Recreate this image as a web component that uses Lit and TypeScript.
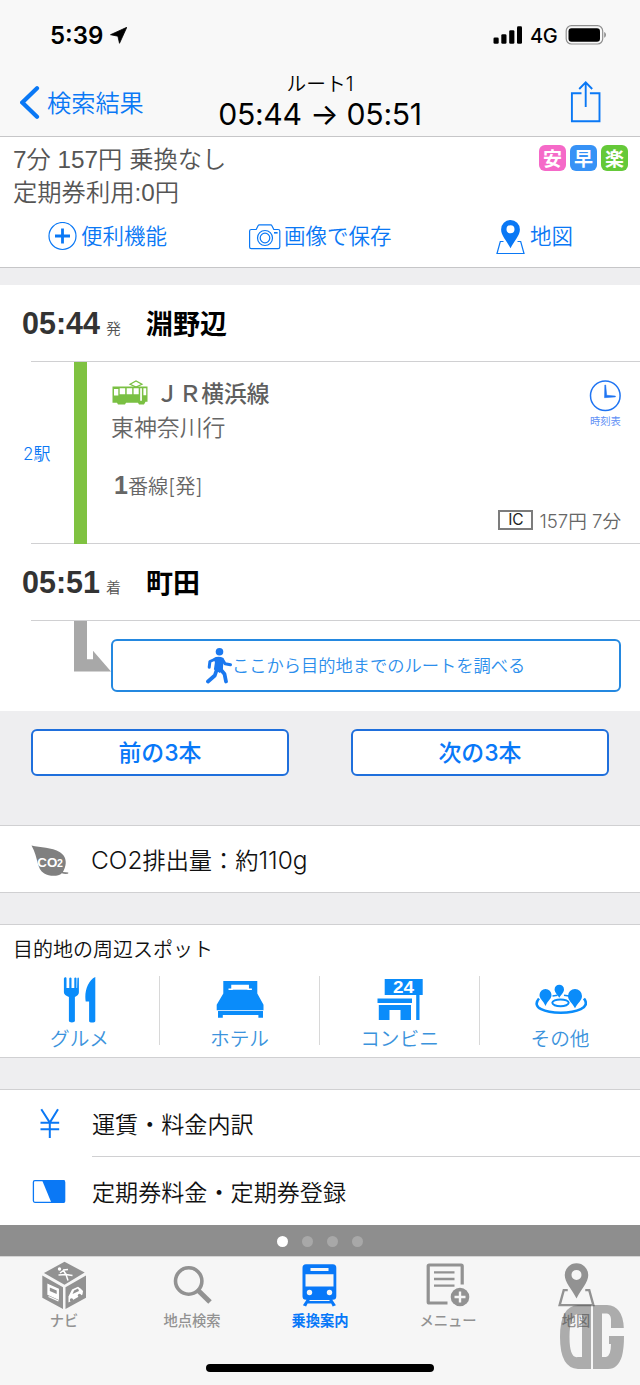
import { LitElement, html, css, svg } from "lit";
import { customElement, property } from "lit/decorators.js";

const icon = (box: string, w: number, h: number, body: unknown) =>
  html`<svg viewBox=${box} width=${w} height=${h} fill="currentColor">${body}</svg>`;

const pin = (sw: number) => svg`
  <path d="M510.500 220a9.400 9.400 0 0 0-9.400 9.400c0 6.100 5.500 11 9.400 18.800 3.900-7.800 9.400-12.700 9.400-18.800a9.400 9.400 0 0 0-9.400-9.400zm0 5.300a4 4 0 1 1 0 8 4 4 0 0 1 0-8z" fill-rule="evenodd"/>
  <path d="M503.500 241.500h-3.200l-3.300 12h27l-3.300-12h-3.200" fill="none" stroke="currentColor" stroke-width=${sw}/>`;

const icons = {
  location: icon("110 27 17 17", 17, 17, svg`<path d="M126.800 27.300 110.500 34.700 117.900 36.200 119.500 43.300z" stroke="currentColor" stroke-width=".8" stroke-linejoin="round"/>`),
  signal: icon("493 26 30 18", 30, 18, svg`<rect x="493.500" y="37.500" width="5.200" height="6.300" rx="1.300"/><rect x="501.300" y="34.300" width="5.200" height="9.500" rx="1.300"/><rect x="509.200" y="30.300" width="5.200" height="13.500" rx="1.300"/><rect x="517" y="26.200" width="5" height="17.600" rx="1.300"/>`),
  battery: icon("565 25 42 20", 42, 20, svg`<rect x="566.200" y="25.700" width="36.500" height="18.300" rx="5.200" fill="#f8f8f8" stroke="#8f8f8f" stroke-width="1.200"/><rect x="568.500" y="28.300" width="31.500" height="13.400" rx="3"/><path d="M604.200 32c2.400 1 2.400 4.700 0 5.800z" fill="#8f8f8f"/>`),
  back: icon("20 86 20 33", 20, 33, svg`<path d="M37 88.300 22.300 102.500 37 116.700" fill="none" stroke="currentColor" stroke-width="4.200" stroke-linecap="round"/>`),
  share: icon("570 80 32 43", 32, 43, svg`<path d="M581.500 93.300h-9.600v28h27.600v-28h-9.600M585.700 107V82.500M579.200 89l6.500-6.700 6.500 6.700" fill="none" stroke="currentColor" stroke-width="1.900"/>`),
  plus: icon("48 222 29 29", 29, 29, svg`<circle cx="62.500" cy="236" r="13.500" fill="none" stroke="currentColor" stroke-width="1.200"/><path d="M55 236h15M62.500 228.500v15" stroke="currentColor" stroke-width="2.800"/>`),
  camera: icon("249 223 32 26", 32, 26, svg`<g fill="none" stroke="currentColor" stroke-width="1.200"><path d="M251.300 228.500h4.900l2-4c.3-.5.600-.7 1.200-.700h11.200c.6 0 1 .2 1.200.7l2 4h4.300c1 0 1.700.7 1.700 1.600v15.900c0 1-.7 1.600-1.700 1.600h-26.800c-1 0-1.700-.7-1.700-1.600v-15.900c0-.9.700-1.600 1.700-1.600z"/><circle cx="265" cy="237" r="7.500"/><circle cx="265" cy="237" r="4.800"/></g><rect x="274" y="231" width="3.600" height="1.600"/>`),
  map: icon("496 219 29 36", 29, 36, pin(1.2)),
  mapTab: icon("496 219 29 36", 37, 45, pin(1.9)),
  tram: icon("112 380 36 25", 36, 25, svg`<path d="M112.500 386.500h35v15.300h-2l-1.500 2.600h-5l-1-1.600h-12l-1 1.600h-7l-1-1.600h-4.500z"/><path d="M130 384.200 136 381 142 384.200 136 387z" fill="none" stroke="currentColor" stroke-width="1.200"/><path d="M114 389h4.300v6.500h-4.300zM119.700 388.300h5.500v6h-5.500zM126.700 388.300h5.500v6h-5.500zM133.600 388.300h5.100v6h-5.100zM140.200 388.300h1.700v12.500h-1.700zM143.400 388.300h2.800v7h-2.800z" fill="#fff"/>`),
  clock: icon("589 380 32 32", 32, 32, svg`<circle cx="605.300" cy="395.800" r="14.800" fill="none" stroke="currentColor" stroke-width="1.500"/><path d="M604.800 385h.9l1 10.300 8.700.7v.9l-10.900.8z" stroke="currentColor" stroke-width=".5"/>`),
  turn: icon("74 621 37 51", 37, 51, svg`<path d="M74 621h13v38.300h6v-8.600L111 671.500H74z"/>`),
  walk: icon("205 647 28 37", 28, 37, svg`<circle cx="219.500" cy="651.700" r="3.800"/><g fill="none" stroke="currentColor" stroke-linecap="round" stroke-linejoin="round"><path d="M215.500 659 209.900 661.500 209.200 667.300M222.500 659.500 225 663.700 230.500 664.800" stroke-width="3"/><path d="M217 669 214.800 675.500 208 681.500M219.800 668.500 224.500 674 226 681.500" stroke-width="3.800"/></g><path d="M213.500 658.200q4.500-2.500 10-.3l-.6 12-3 3-6-3.500 1-7z"/>`),
  leaf: icon("31 845 38 32", 38, 32, svg`<path d="M31.500 845.500c9 2.500 20 1.500 28.500 6.800 5.500 3.500 7 9.500 4.800 15.500-.7 2-1.200 3-1.900 4.200l5.400.6-.2 1.200c-2.500.3-4.500.1-6.300-.6-3.500 3.600-12.500 3.300-17.500.3-8-5-5.500-14.500-12.800-28z"/><text class="co" x="37.300" y="867.200" font-size="13.500" textLength="20" lengthAdjust="spacingAndGlyphs" fill="#fff">CO</text><text class="co" x="57" y="867.200" font-size="10.500" fill="#fff">2</text>`),
  food: icon("62 976 36 47", 36, 47, svg`<path d="M64.600 977.500c.9-.4 1.800 0 1.900.8V988h2.800v-9.700c.2-1.200 2-1.200 2.200 0V988h2.800v-9.700c.2-1.200 2-1.200 2.200 0V988h.6l.3-9.700c.2-1 1.400-1 1.500.2v13.800c0 2.300-1.500 3.700-4 4.600v24.200c0 1.800-6 1.800-6 0v-24.200c-3-.9-5-2.300-5-4.600v-13.800zM95.300 978v43c0 2-6.200 2-6.200.2v-19.700h-3.400c-1.600-9.500 2-21 9.600-24.500z"/>`),
  bed: icon("216 980 48 39", 48, 39, svg`<path d="M223.300 981h34v12.500l6.200 11.200v5.500h-46.800v-5.500l6.600-11.200z"/><path d="M218 1011h45v6.800h-4.600V1015h-35.600v2.800H218z"/><path d="M228.500 989.200h3.500v-3.700h16.200v3.700h3.700" fill="none" stroke="#fff" stroke-width="1.500"/><path d="M232 986h16v3.700h-16z" fill="#fff"/>`),
  store: icon("377 978 46 43", 46, 43, svg`<path d="M384.700 979h38v16h-3.200v25h-3.300v-25h-31.500zM377.500 998.500H412v4.500h-34.500zM378.800 1005H411v15h-10.500v-10h-11v10h-10.700z"/><text class="sign" x="393" y="993" font-size="16.800" textLength="21" lengthAdjust="spacingAndGlyphs" fill="#fff">24</text>`),
  spots: icon("533 984 53 31", 53, 31, svg`<g fill="none" stroke="currentColor"><path d="M538 998.500c-16.500 19 59.500 19 45 0" stroke-width="2.600"/><ellipse cx="559.500" cy="1002.800" rx="8.200" ry="3.400" stroke-width="2"/><path d="M551.500 996l5-.8M563 995.200l5 .8" stroke-width="1.600"/></g><path d="M544.500 989a6 6 0 0 0-6 6c0 4 3.500 5 6 11 2.500-6 6-7 6-11a6 6 0 0 0-6-6zM558.300 984.700a4.700 4.700 0 0 0-4.700 4.700c0 3 2.700 4.700 4.700 8.300 2-3.600 4.700-5.300 4.700-8.300a4.700 4.700 0 0 0-4.700-4.700zM574 989a7 7 0 0 0-7 7c0 4.500 4 6.500 7 12.200 3-5.700 7-7.700 7-12.200a7 7 0 0 0-7-7z"/>`),
  yen: icon("39 1108 21 31", 21, 31, svg`<path d="M41.300 1109.200 49.800 1122.500 58 1109.200M49.800 1122v16M40.500 1122.700h18.700M40.500 1129.300h18.700" fill="none" stroke="currentColor" stroke-width="2"/>`),
  pass: icon("32 1179 34 25" , 34, 25, svg`<rect x="33.400" y="1180.700" width="31.100" height="21.600" rx="1.500" fill="#fff" stroke="currentColor" stroke-width="1.300"/><path d="M42 1180h21.500q1.700 0 1.700 1.700v19.600q0 1.700-1.700 1.700H51.500z"/>`),
  navi: icon("42 1261 45 49", 45, 49, svg`<path d="M64.500 1261.800 84.700 1272.500 64.500 1284.700 44 1273zM42.300 1275.500 63 1287.200V1309L42.300 1297.700zM86 1275.500 65.500 1287.200V1309L86 1297.700z"/><circle cx="59.500" cy="1269" r="1.700" fill="#fff"/><path d="M60 1273 63.500 1270.500 66 1274.500 72.500 1275.500M58.500 1275 66 1274.500 68 1280.500M63 1270l5-.5" fill="none" stroke="#fff" stroke-width="1.500"/><path d="M48 1284.500 58.300 1289.200V1299L48 1294.300zM48.500 1296.500 58.500 1301" fill="#fff" stroke="#fff" stroke-width="1.300"/><path d="M49.800 1287.500 56.700 1290.500V1294L49.800 1291z"/><path d="M68.500 1296.500 72 1289.500 78 1286.700 80.800 1288.800 83 1291 82.500 1294.500 68.500 1302.500z" fill="#fff"/><circle cx="71.500" cy="1300" r="1.700"/><circle cx="79.500" cy="1295.500" r="1.700"/><path d="M72.500 1294 74 1290.500 78 1288.500 79 1291z"/>`),
  search: icon("174 1265 39 39", 39, 39, svg`<circle cx="189.700" cy="1281" r="13.200" fill="none" stroke="currentColor" stroke-width="3.600"/><path d="M199.500 1290.700 211 1302" stroke="currentColor" stroke-width="5"/>`),
  train: icon("302 1263 36 44", 36, 44, svg`<path d="M306 1264.300h26.800q3.500 0 3.500 3.500v28.500q0 3.500-3.500 3.500h-.5l3.600 5.500-3.200 1.200-1.500-3h-23.600l-1.500 3-3.200-1.200 3.600-5.500h-.5q-3.500 0-3.500-3.500v-28.500q0-3.500 3.500-3.500z"/><path d="M310.500 1268h18v3h-18zM305.500 1274.300h28V1286.500h-28z" fill="#f6f6f6"/><circle cx="309.500" cy="1292.500" r="2.700" fill="#f6f6f6"/><circle cx="329.500" cy="1292.500" r="2.700" fill="#f6f6f6"/><path d="M309.500 1300.500h20" stroke="#f6f6f6" stroke-width="1"/>`),
  menu: icon("427 1263 45 45", 45, 45, svg`<path d="M448.500 1304h-18.300q-1 0-1-1v-36q0-1 1-1h32q1 0 1 1v18.500" fill="none" stroke="currentColor" stroke-width="3.200"/><path d="M435 1273.300h20.500M435 1280h20.500M435 1286.700h20.500" stroke="currentColor" stroke-width="2.300"/><circle cx="461" cy="1298" r="9.300"/><path d="M461 1292.500v11M455.500 1298h11" stroke="#f6f6f6" stroke-width="2.400"/>`),
  emblem: icon("560 1305 64 64", 64, 64, svg`<path d="M591 1305v64h-13q-18-1-18-32t18-32zM582 1314h-4q-8.500 1-8.500 23t8.500 20h4z" fill-rule="evenodd"/><path d="M593 1305h14q16 1 16.800 23h-12.800v-9q-.5-5-4-5.500H602V1357h4q5-1 5-13h-2v-8h15q0 12-2 20-4 13-14 13H593z"/>`),
};

@customElement("rank-badge")
class RankBadge extends LitElement {
  @property() kind = "";
  static styles = css`
    :host { display: block; }
    .badge { width: 27px; height: 26px; border-radius: 6px; color: #fff; text-align: center; font: 700 19px/25px "Noto Sans CJK JP", sans-serif; }
    .cheap { background: #f569c8; }
    .fast { background: #3792f6; }
    .easy { background: #65c939; }
  `;
  render() {
    return html`<div class="badge ${this.kind}"><slot></slot></div>`;
  }
}

@customElement("app-root")
class AppRoot extends LitElement {
  static styles = css`
    :host { display: block; width: 640px; height: 1385px; overflow: hidden; background: #eeeef0; color: #111; position: relative;
      font-family: Inter, "Noto Sans CJK JP", sans-serif; --blue: #0a78f5; --line: #d0d0d2; }
    * { box-sizing: border-box; }
    svg { display: block; flex: none; }
    .row { display: flex; white-space: nowrap; }
    .header { height: 137px; background: #f8f8f8; border-bottom: 1px solid #c6c6c8; }
    .status { height: 68px; padding: 25px 33px 0 50px; color: #000; }
    .time { font-size: 24px; line-height: 21px; font-weight: 600; width: 60px; }
    .status .loc { padding-top: 2px; flex: 1; }
    .status .bars { padding-top: 1px; width: 37px; }
    .net { font-size: 20px; line-height: 22px; font-weight: 500; width: 35px; letter-spacing: -.4px; }
    .nav { display: grid; grid-template-columns: 200px 240px 200px; height: 68px; }
    .back { padding: 18px 0 0 20px; color: var(--blue); gap: 7px; font-size: 24.200px; line-height: 35px; font-weight: 350; }
    .title { text-align: center; color: #000; }
    .title small { display: block; font-size: 19.700px; line-height: 26px; height: 27px; padding-top: 3px; font-weight: 350; }
    .title b { display: block; font-weight: 400; font-size: 30.200px; line-height: 38px; letter-spacing: -.3px; white-space: nowrap; }
    .share { color: var(--blue); padding: 12px 0 0 130px; }
    .summary { height: 131px; background: #fff; border-bottom: 1px solid #c6c6c8; padding-top: 6px; }
    .facts { height: 67px; padding: 0 12px 0 13px; justify-content: space-between; color: #555; font: 350 24.300px/33px "Liberation Sans", "Noto Sans CJK JP", sans-serif; }
    .badges { display: flex; gap: 4px; padding-top: 2px; }
    .tools { color: var(--blue); font-size: 21.500px; line-height: 38px; font-weight: 350; }
    .tools .row { align-items: center; height: 52px; }
    .tools svg { margin-top: 1px; }
    .t1 { padding-left: 48px; gap: 4px; width: 249px; }
    .t2 { gap: 3px; width: 247px; }
    .t3 { gap: 5px; }
    .route { margin-top: 17px; background: #fff; height: 426px; }
    .station { height: 76px; padding-left: 22px; font-family: "Liberation Sans", "Noto Sans CJK JP", sans-serif; align-items: baseline; line-height: 76px; }
    .station .at { width: 84px; font-size: 30.500px; font-weight: 700; color: #333; }
    .station .dir { width: 40px; font-size: 15px; color: #555; font-weight: 350; }
    .station .name { font-size: 27px; font-weight: 700; color: #000; }
    .leg { margin-left: 31px; border-top: 1px solid var(--line); border-bottom: 1px solid var(--line); height: 183px; }
    .stops { width: 43px; margin-left: -8px; margin-right: 8px; color: var(--blue); font-size: 17px; line-height: 184px; font-weight: 350; }
    .track { width: 13px; height: 182px; background: #7fc241; }
    .ride { flex: 1; padding: 18px 19px 0 25px; color: #666; }
    .line { gap: 8px; font: 500 22.700px/25px "Noto Sans CJK JP", sans-serif; color: #5f5f5f; }
    .tram { color: #7ac043; }
    .line b { font-weight: 500; }
    .bound { font-size: 22.900px; line-height: 38px; height: 40px; padding-top: 4px; font-weight: 350; margin-left: -1px; }
    .platform { font-size: 20.200px; line-height: 34px; padding: 23px 0 0 2px; font-weight: 350; }
    .platform b { font: 700 25px/34px "Liberation Sans", sans-serif; }
    .fare { justify-content: flex-end; gap: 6px; padding-top: 5px; font-size: 18.600px; line-height: 24px; font-weight: 350; }
    .ic { width: 35px; height: 20px; margin-top: 1px; border: 2px solid #7c7c7c; text-align: center; color: #222; font-weight: 400; font-size: 15.500px; line-height: 16px; }
    .info { flex: 1; }
    .timetable { width: 32px; margin-left: -32px; color: #1f74f2; }
    .timetable span { display: block; font-size: 10.300px; line-height: 15px; padding-top: 2px; margin-left: 1px; color: #5e8ff5; }
    .onward { margin-left: 31px; border-top: 1px solid var(--line); padding-left: 43px; }
    .turn { color: #a8a8a8; }
    .search { margin-top: 18px; width: 510px; height: 53px; border: 2px solid #2488e0; border-radius: 6px; color: #2b8eec; font-size: 17.250px; line-height: 50px; font-weight: 350; padding-left: 92px; }
    .search svg { margin-top: 6px; color: #1a78ef; }
    .search span { margin-left: -1px; }
    .more { height: 114px; padding: 18px 31px 0; justify-content: space-between; }
    .more div { width: 258px; height: 47px; border: 2px solid #1f6fdc; border-radius: 6px; background: #fff; color: #0878f8; text-align: center; font-size: 22.900px; font-weight: 500; line-height: 45px; }
    .co2 { height: 68px; background: #fff; border: solid var(--line); border-width: 1px 0; padding-left: 31px; color: #808080; }
    .co2 svg { margin-top: 19px; }
    .co2 .amount { margin-left: 22px; color: #111; font-size: 23.200px; line-height: 68px; font-weight: 350; }
    .co2 .num { font-size: 24.500px; }
    .co2 .lead { font-size: 24.500px; }
    .co, .sign { font-family: "Liberation Sans", sans-serif; font-weight: 700; }
    .nearby { margin-top: 31px; height: 134px; background: #fff; border: solid var(--line); border-width: 1px 0; }
    .nearby h2 { margin: 0; font-size: 20px; font-weight: 350; line-height: 35px; padding: 8px 0 0 13px; height: 51px; }
    .spot { width: 160px; height: 69px; border-right: 1px solid #d8d8d8; color: #3b93dc; display: flex; flex-direction: column; align-items: center; font-size: 19.700px; line-height: 32px; font-weight: 350; }
    .spot:last-child { border: 0; }
    .spot svg { color: #0a8cfa; }
    .pic { height: 47px; display: flex; align-items: center; flex: none; }
    .list { margin-top: 31px; height: 136px; background: #fff; border-top: 1px solid var(--line); color: #111; font-size: 23.100px; font-weight: 350; line-height: 70px; }
    .item { height: 67px; align-items: center; }
    .item span { flex: 1; height: 67px; border-bottom: 1px solid var(--line); }
    .item:last-child span { border: 0; line-height: 72px; }
    .item i { width: 92px; color: var(--blue); display: block; }
    .item .yen { padding-left: 39px; }
    .item .pass { padding: 2px 0 0 32px; }
    .pager { height: 31px; background: #8e8e8e; gap: 14px; justify-content: center; align-items: center; padding-top: 1px; }
    .dot { width: 11px; height: 11px; border-radius: 50%; background: #a8a8a8; }
    .dot.on { background: #fff; }
    .tabs { background: #f6f6f6; height: 129px; border-top: 1px solid #d5d5d5; color: #929292; }
    .tab { width: 128px; display: flex; flex-direction: column; align-items: center; font-size: 14.300px; line-height: 20px; font-weight: 500; }
    .tab .glyph { height: 54px; padding-top: 3px; display: flex; align-items: center; }
    .tab:not(:first-child) .glyph { padding: 1px 0 0; }
    .tab.on { color: #0878f8; font-weight: 700; }
    .home { position: absolute; left: 206px; top: 1364px; width: 228px; height: 8px; border-radius: 4px; background: #000; }
    .emblem { position: absolute; left: 560px; top: 1305px; color: rgba(70, 70, 70, .42); }
  `;

  render() {
    const tab = (g: unknown, label: string, on = false) =>
      html`<div class="tab ${on ? "on" : ""}"><div class="glyph">${g}</div>${label}</div>`;
    const spot = (g: unknown, label: string) => html`<div class="spot"><div class="pic">${g}</div>${label}</div>`;
    const station = (at: string, dir: string, name: string) =>
      html`<div class="row station"><span class="at">${at}</span><span class="dir">${dir}</span><span class="name">${name}</span></div>`;
    return html`
      <div class="header">
        <div class="row status">
          <div class="time">5:39</div><div class="loc">${icons.location}</div>
          <div class="bars">${icons.signal}</div><div class="net">4G</div>${icons.battery}
        </div>
        <div class="nav">
          <div class="row back">${icons.back}<span>検索結果</span></div>
          <div class="title"><small>ルート1</small><b>05:44 → 05:51</b></div>
          <div class="share">${icons.share}</div>
        </div>
      </div>
      <div class="summary">
        <div class="row facts">
          <div>7分 157円 乗換なし<br />定期券利用:0円</div>
          <div class="badges"><rank-badge kind="cheap">安</rank-badge><rank-badge kind="fast">早</rank-badge><rank-badge kind="easy">楽</rank-badge></div>
        </div>
        <div class="row tools">
          <div class="row t1">${icons.plus}<span>便利機能</span></div>
          <div class="row t2">${icons.camera}<span>画像で保存</span></div>
          <div class="row t3">${icons.map}<span>地図</span></div>
        </div>
      </div>
      <div class="route">
        ${station("05:44", "発", "淵野辺")}
        <div class="row leg">
          <div class="stops">2駅</div>
          <div class="track"></div>
          <div class="ride">
            <div class="row">
              <div class="info">
                <div class="row line"><span class="tram">${icons.tram}</span><b>ＪＲ横浜線</b></div>
                <div class="bound">東神奈川行</div>
              </div>
              <div class="timetable">${icons.clock}<span>時刻表</span></div>
            </div>
            <div class="platform"><b>1</b>番線[発]</div>
            <div class="row fare"><span class="ic">IC</span><span>157円 7分</span></div>
          </div>
        </div>
        ${station("05:51", "着", "町田")}
        <div class="row onward">
          <div class="turn">${icons.turn}</div>
          <div class="row search">${icons.walk}<span>ここから目的地までのルートを調べる</span></div>
        </div>
      </div>
      <div class="row more"><div>前の3本</div><div>次の3本</div></div>
      <div class="row co2">${icons.leaf}<span class="amount"><span class="lead">CO2</span>排出量：約<span class="num">110g</span></span></div>
      <div class="nearby">
        <h2>目的地の周辺スポット</h2>
        <div class="row">
          ${spot(icons.food, "グルメ")}${spot(icons.bed, "ホテル")}${spot(icons.store, "コンビニ")}${spot(icons.spots, "その他")}
        </div>
      </div>
      <div class="list">
        <div class="row item"><i class="yen">${icons.yen}</i><span>運賃・料金内訳</span></div>
        <div class="row item"><i class="pass">${icons.pass}</i><span>定期券料金・定期券登録</span></div>
      </div>
      <div class="row pager"><div class="dot on"></div><div class="dot"></div><div class="dot"></div><div class="dot"></div></div>
      <div class="row tabs">
        ${tab(icons.navi, "ナビ")}${tab(icons.search, "地点検索")}${tab(icons.train, "乗換案内", true)}${tab(icons.menu, "メニュー")}${tab(icons.mapTab, "地図")}
      </div>
      <div class="home"></div>
      <div class="emblem">${icons.emblem}</div>
    `;
  }
}
